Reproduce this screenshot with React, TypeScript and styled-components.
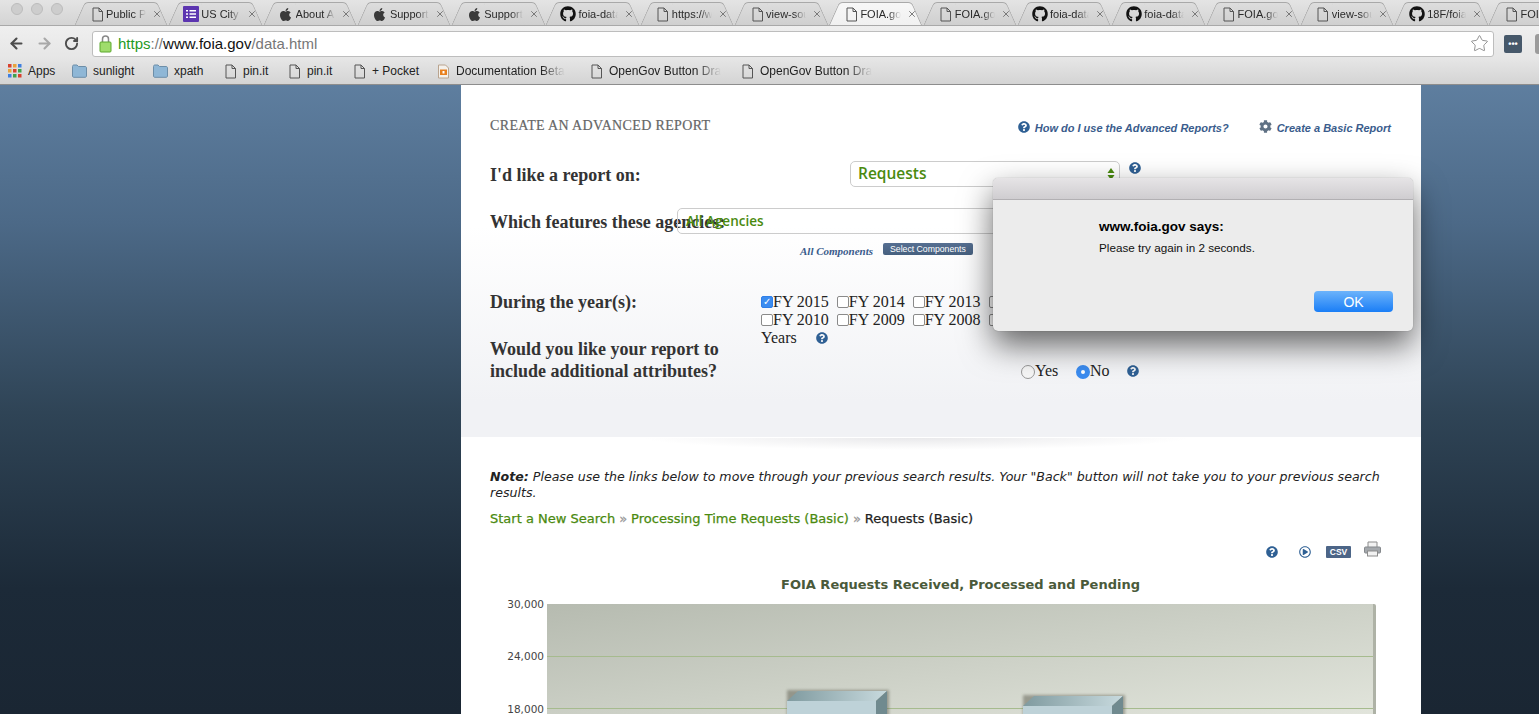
import styled, { createGlobalStyle } from "styled-components";
import { ArrowLeft, ArrowRight, RotateCw, Star, X } from "lucide-react";
import { FaApple, FaCog, FaGithub, FaQuestionCircle, FaRegPlayCircle } from "react-icons/fa";

const GlobalStyle = createGlobalStyle`
  html, body {
    margin: 0;
    height: 100%;
    overflow: hidden;
    background: #1a2734;
  }
`;

const Page = styled.div`
  position: relative;
  width: 1539px;
  height: 714px;
  overflow: hidden;
  display: flex;
  flex-direction: column;
  font-family: "Liberation Sans", Arial, sans-serif;
`;

const Chrome = styled.header`
  height: 85px;
  flex: none;
  box-sizing: border-box;
  border-bottom: 1px solid #8d8d8d;
  background: #dcdcdc;
  display: flex;
  flex-direction: column;
`;

const TabStrip = styled.div`
  height: 26px;
  flex: none;
  display: flex;
  overflow: hidden;
  padding-left: 11px;
  border-bottom: 1px solid #a9a9a9;
  box-sizing: border-box;
  background: linear-gradient(#e4e4e4, #d4d4d4);
`;

const Lights = styled.div`
  display: flex;
  gap: 8px;
  width: 63px;
  flex: none;
  padding-top: 3px;
`;

const Light = styled.span`
  width: 12px;
  height: 12px;
  border-radius: 50%;
  background: #cdcdcd;
  border: 1px solid #bcbcbc;
  box-sizing: border-box;
`;

const Tab = styled.div<{ $active?: boolean }>`
  position: relative;
  width: 94.3px;
  height: 24px;
  margin-top: 2px;
  flex: none;
  box-sizing: border-box;
  display: flex;
  align-items: center;
  padding: 0 6px 0 15px;
  font-size: 11px;
  color: #2a2a2a;
  z-index: ${(p) => (p.$active ? 1 : 0)};

  &::before,
  &::after {
    content: "";
    position: absolute;
    top: 0;
    bottom: ${(p) => (p.$active ? "-1px" : "0")};
    width: 55%;
    box-sizing: border-box;
    background: ${(p) => (p.$active ? "linear-gradient(#f7f7f7, #f0f0f0)" : "linear-gradient(#dddddd, #cfcfcf)")};
    border-top: 1px solid #a9a9a9;
    z-index: -1;
  }

  &::before {
    left: 0;
    border-left: 1px solid #a9a9a9;
    border-radius: 4px 0 0 0;
    transform: skewX(-24deg);
    transform-origin: bottom left;
  }

  &::after {
    right: 0;
    border-right: 1px solid #a9a9a9;
    border-radius: 0 4px 0 0;
    transform: skewX(24deg);
    transform-origin: bottom right;
  }
`;

const TabIcon = styled.span<{ $gap: number }>`
  width: 16px;
  flex: none;
  display: flex;
  justify-content: center;
  margin-right: ${(p) => p.$gap}px;
  color: #3a3a3a;
`;

const TabGithub = styled(FaGithub)`
  color: #111;
`;

const TabTitle = styled.span`
  flex: 1;
  min-width: 0;
  white-space: nowrap;
  overflow: hidden;
  -webkit-mask-image: linear-gradient(to right, #000 70%, transparent);
  mask-image: linear-gradient(to right, #000 70%, transparent);
`;

const TabClose = styled(X)`
  width: 10px;
  height: 10px;
  flex: none;
  margin-left: 6px;
  color: #666;
`;

const Toolbar = styled.div`
  height: 32px;
  flex: none;
  display: flex;
  align-items: center;
  padding: 3px 0 0 8px;
  box-sizing: border-box;
  background: linear-gradient(#efefef, #e6e6e6);
`;

const NavButton = styled.span<{ $muted?: boolean }>`
  width: 28px;
  flex: none;
  display: flex;
  justify-content: flex-start;
  color: ${(p) => (p.$muted ? "#a8a8a8" : "#4c4c4c")};
`;

const Omnibox = styled.div`
  width: 1402px;
  height: 26px;
  flex: none;
  box-sizing: border-box;
  display: flex;
  align-items: center;
  padding: 0 3px 0 6px;
  background: #fff;
  border: 1px solid #bdbdbd;
  border-radius: 3px;
  font-size: 15px;
  color: #777;
`;

const Url = styled.span`
  flex: 1;
  margin-left: 6px;
`;

const UrlScheme = styled.span`
  color: #1f9a1f;
`;

const UrlHost = styled.span`
  color: #111;
`;

const StarIcon = styled(Star)`
  color: #777;
  margin-right: 1px;
`;

const ExtensionIcon = styled.span`
  width: 18px;
  height: 18px;
  flex: none;
  margin-left: 10px;
  background: #46586a;
  color: #fff;
  border-radius: 2px;
  font-size: 9px;
  font-weight: 700;
  line-height: 18px;
  text-align: center;
`;

const SecondExtension = styled.span`
  width: 18px;
  height: 20px;
  flex: none;
  margin-left: 13px;
  background: #9b9b9b;
  border-radius: 3px;
`;

const Bookmarks = styled.nav`
  flex: 1;
  display: flex;
  align-items: center;
  padding-left: 8px;
  overflow: hidden;
  background: linear-gradient(#e6e6e6, #d4d4d4);
  font-size: 12px;
  color: #222;
`;

const Bookmark = styled.div<{ $width: number }>`
  width: ${(p) => p.$width}px;
  flex: none;
  display: flex;
  align-items: center;
  gap: 6px;
  white-space: nowrap;
`;

const BookmarkLabel = styled.span`
  overflow: hidden;
  max-width: 112px;
  -webkit-mask-image: linear-gradient(to right, #000 78%, transparent);
  mask-image: linear-gradient(to right, #000 78%, transparent);
`;

const Viewport = styled.main`
  flex: 1;
  min-height: 0;
  display: flex;
  padding-left: 461px;
  background: linear-gradient(#5e7e9f 0, #4c6987 22%, #2f4456 52%, #1c2a38 80%, #1a2633);
`;

const Sheet = styled.div`
  width: 960px;
  flex: none;
  background: #fff;
  display: flex;
  flex-direction: column;
`;

const FormPanel = styled.section`
  height: 352px;
  flex: none;
  box-sizing: border-box;
  padding: 32px 30px 0 29px;
  background: linear-gradient(#fff 0, #fff 40%, #f1f2f5 90%);
  color: #333;
`;

const PanelHeader = styled.div`
  display: flex;
  align-items: center;
  height: 17px;
`;

const PanelTitle = styled.h2`
  flex: 1;
  margin: 0;
  font-family: "Liberation Serif", serif;
  font-size: 14px;
  font-weight: 400;
  color: #666;
  letter-spacing: 0.35px;
  -webkit-text-stroke: 0.2px #666;
`;

const HelpLink = styled.a`
  display: flex;
  align-items: center;
  gap: 5px;
  margin-left: 30px;
  margin-top: 5px;
  font-size: 11px;
  font-weight: 700;
  font-style: italic;
  color: #3a5c8c;
`;

const HelpIcon = styled(FaQuestionCircle)`
  color: #2f6094;
  flex: none;
`;

const LinkHelpIcon = styled(HelpIcon)`
  margin-top: -3px;
`;

const GearIcon = styled(FaCog)`
  color: #5f7184;
  flex: none;
  margin-top: -3px;
`;

const FieldRow = styled.div<{ $height: number; $top?: number }>`
  display: flex;
  height: ${(p) => p.$height}px;
  margin-top: ${(p) => p.$top ?? 0}px;
`;

const FieldLabel = styled.label<{ $width: number; $offset?: number }>`
  width: ${(p) => p.$width}px;
  flex: none;
  margin-top: ${(p) => p.$offset ?? 0}px;
  font-family: "Liberation Serif", serif;
  font-size: 18px;
  font-weight: 700;
  line-height: 22px;
  color: #333;
  white-space: nowrap;
`;

const SelectBox = styled.div<{ $width: number; $large?: boolean }>`
  position: relative;
  width: ${(p) => p.$width}px;
  height: 26px;
  flex: none;
  box-sizing: border-box;
  padding-left: ${(p) => (p.$large ? 7 : 8)}px;
  border: 1px solid #ccc;
  border-radius: 5px;
  font-family: "Open Sans", "DejaVu Sans", sans-serif;
  font-size: ${(p) => (p.$large ? 15.5 : 13.5)}px;
  font-weight: 600;
  line-height: ${(p) => (p.$large ? 22 : 24)}px;
  color: #4a8a0f;
`;

const SelectArrows = styled.svg`
  position: absolute;
  right: 4px;
  top: 5px;
`;

const RowHelp = styled(HelpIcon)`
  margin-left: 9px;
  margin-top: 1px;
`;

const ComponentsRow = styled.div`
  display: flex;
  align-items: center;
  height: 13px;
  margin-top: 8px;
  padding-left: 310px;
`;

const ComponentsLabel = styled.em`
  width: 83px;
  flex: none;
  font-family: "Liberation Serif", serif;
  font-size: 11px;
  font-weight: 700;
  color: #3a5c8c;
  margin-top: 5px;
`;

const SmallButton = styled.span`
  height: 12px;
  box-sizing: border-box;
  padding: 0 7px;
  background: linear-gradient(#566f92, #46607f);
  color: #fff;
  font-size: 8.7px;
  line-height: 12px;
  border-radius: 2px;
`;

const YearGroup = styled.div`
  flex: none;
  font-family: "Liberation Serif", serif;
  font-size: 16px;
  line-height: 18px;
  color: #222;
`;

const YearLine = styled.div`
  white-space: nowrap;
`;

const YearOption = styled.span`
  margin-right: 4px;
`;

const Checkbox = styled.i<{ $checked?: boolean }>`
  display: inline-block;
  vertical-align: top;
  margin-top: 3px;
  width: 12px;
  height: 12px;
  box-sizing: border-box;
  border-radius: 2px;
  border: 1px solid ${(p) => (p.$checked ? "#2f7fe8" : "#8a8a8a")};
  background: ${(p) => (p.$checked ? "#3b8cf0" : "#fff")};
  color: #fff;
  font-style: normal;
  font-size: 10px;
  line-height: 10px;
  text-align: center;
`;

const YearHelp = styled(HelpIcon)`
  margin-left: 19px;
  position: relative;
  top: 1px;
`;

const AttributeOptions = styled.div`
  display: flex;
  align-items: center;
  height: 22px;
  margin-top: 22px;
  font-family: "Liberation Serif", serif;
  font-size: 16px;
  color: #222;
  margin-left: 301px;
`;

const Radio = styled.i<{ $checked?: boolean }>`
  width: 14px;
  height: 14px;
  flex: none;
  box-sizing: border-box;
  border-radius: 50%;
  margin-top: 2px;
  border: ${(p) => (p.$checked ? "5px solid #3b8cf0" : "1px solid #999")};
  background: ${(p) => (p.$checked ? "#fff" : "#f6f6f6")};
`;

const RadioText = styled.span<{ $width: number }>`
  width: ${(p) => p.$width}px;
  flex: none;
`;

const ResultPanel = styled.section`
  position: relative;
  flex: 1;
  min-height: 0;
  overflow: hidden;
  padding: 31px 30px 0 29px;
  border-top: 1px solid #fff;

  &::before {
    content: "";
    position: absolute;
    left: 180px;
    top: 0;
    width: 550px;
    height: 12px;
    background: radial-gradient(ellipse at top, #e9e9eb, transparent 70%);
  }
`;

const Note = styled.p`
  margin: 0;
  font-family: "DejaVu Sans", sans-serif;
  font-size: 12.6px;
  font-style: italic;
  line-height: 16px;
  color: #222;
`;

const NoteLead = styled.strong`
  font-weight: 700;
`;

const Crumbs = styled.div`
  margin-top: 9px;
  font-family: "DejaVu Sans", sans-serif;
  font-size: 13px;
  line-height: 18px;
  color: #222;
  -webkit-text-stroke: 0.25px;
`;

const CrumbLink = styled.a`
  color: #4a8a0f;
`;

const CrumbSep = styled.span`
  color: #999;
  margin: 0 4px;
`;

const ChartTools = styled.div`
  display: flex;
  align-items: center;
  justify-content: flex-end;
  height: 24px;
  margin-top: 12px;
  padding-right: 10px;
`;

const PlayIcon = styled(FaRegPlayCircle)`
  color: #2f6094;
  margin-left: 21px;
`;

const CsvBadge = styled.span`
  margin-left: 15px;
  width: 25px;
  height: 12px;
  background: #4c6587;
  color: #fff;
  border-radius: 1px;
  font-size: 8.5px;
  font-weight: 700;
  line-height: 12px;
  text-align: center;
`;

const PrintIcon = styled.svg`
  margin-left: 13px;
  margin-top: -6px;
`;

const ChartTitle = styled.h3`
  margin: 12px 0 0;
  padding-left: 40px;
  font-family: "DejaVu Sans", sans-serif;
  font-size: 13px;
  font-weight: 700;
  line-height: 18px;
  text-align: center;
  color: #4a5a3a;
`;

const Chart = styled.svg`
  display: block;
  margin: 5px 0 0 -29px;
  font-family: "DejaVu Sans", sans-serif;
`;

const Dialog = styled.div`
  position: absolute;
  left: 993px;
  top: 178px;
  width: 420px;
  height: 153px;
  display: flex;
  flex-direction: column;
  background: #ececec;
  border-radius: 5px;
  box-shadow: 0 0 1px rgba(0, 0, 0, 0.4), 0 14px 32px rgba(0, 0, 0, 0.6);
  overflow: hidden;
`;

const DialogBar = styled.div`
  height: 21px;
  flex: none;
  background: linear-gradient(#e6e4e6, #cfcdd0);
  border-bottom: 1px solid #b2b0b3;
`;

const DialogBody = styled.div`
  flex: 1;
  padding: 19px 20px 0 106px;
  display: flex;
  flex-direction: column;
`;

const DialogTitle = styled.div`
  font-size: 13.5px;
  font-weight: 700;
  line-height: 15px;
  color: #000;
`;

const DialogText = styled.div`
  margin-top: 7px;
  font-size: 11.7px;
  line-height: 14px;
  color: #111;
`;

const DialogButton = styled.button`
  align-self: flex-end;
  margin-top: 36px;
  width: 79px;
  height: 21px;
  padding: 0;
  border: none;
  border-radius: 4px;
  background: linear-gradient(#6cb3fb, #1a7ef6);
  color: #fff;
  font-family: inherit;
  font-size: 14px;
`;

const PageGlyph = () => (
  <svg width="13" height="15" viewBox="0 0 13 15" fill="none" stroke="#555" strokeWidth="1">
    <path d="M2 1h6l3.5 3.5V14H2z" />
    <path d="M8 1v3.5h3.5" />
  </svg>
);

const FormsGlyph = () => (
  <svg width="16" height="16" viewBox="0 0 16 16">
    <rect width="16" height="16" rx="1" fill="#5c35b0" />
    <path d="M3 4h2v1.5H3zM3 7.2h2v1.5H3zM3 10.4h2v1.5H3zM6.5 4H13v1.5H6.5zM6.5 7.2H13v1.5H6.5zM6.5 10.4H13v1.5H6.5z" fill="#fff" />
  </svg>
);

const FolderGlyph = () => (
  <svg width="15" height="14" viewBox="0 0 15 14">
    <path d="M.5 2.5C.5 1.6 1 1 2 1h3l1.5 1.5H13c1 0 1.5.6 1.5 1.5V12c0 .8-.6 1.3-1.5 1.3H2c-1 0-1.5-.5-1.5-1.3z" fill="#8fb7d6" stroke="#6d8ea8" />
  </svg>
);

const AppsGlyph = () => (
  <svg width="14" height="14" viewBox="0 0 14 14">
    {["#d8412f", "#e8a33d", "#3f7fe0", "#e8a33d", "#d8412f", "#3fa34d", "#3f7fe0", "#3fa34d", "#d8412f"].map((fill, i) => (
      <rect key={i} x={(i % 3) * 5} y={Math.floor(i / 3) * 5} width="3.5" height="3.5" fill={fill} />
    ))}
  </svg>
);

const DocGlyph = () => (
  <svg width="13" height="15" viewBox="0 0 13 15">
    <path d="M1.5 1h7l3 3v10h-10z" fill="#f4f1ec" stroke="#b9a48f" />
    <rect x="3" y="5.5" width="7" height="5.5" fill="#e8801e" />
    <rect x="5.5" y="7" width="2" height="2.5" fill="#fff" />
  </svg>
);

const LockGlyph = () => (
  <svg width="13" height="19" viewBox="0 0 13 19">
    <path d="M3.5 8V5a3 3 0 0 1 6 0v3" fill="none" stroke="#888" strokeWidth="1.5" />
    <rect x="1" y="8" width="11" height="10" rx="1" fill="#9fdc6c" stroke="#5da82e" />
  </svg>
);

const PrinterGlyph = () => (
  <PrintIcon width="17" height="16" viewBox="0 0 17 16">
    <path d="M4 6V1h9v5" fill="#f2f2f2" stroke="#8c8c8c" />
    <rect x="0.5" y="6" width="16" height="6" rx="1" fill="#a4a8ac" stroke="#85898d" />
    <rect x="3.5" y="10" width="10" height="5" fill="#f2f2f2" stroke="#8c8c8c" />
  </PrintIcon>
);

const tabs = [
  { icon: "page", title: "Public Projects" },
  { icon: "forms", title: "US City Open Data" },
  { icon: "apple", title: "About Apple Support" },
  { icon: "apple", title: "Support Communities" },
  { icon: "apple", title: "Support Communities" },
  { icon: "github", title: "foia-data/foia" },
  { icon: "page", title: "https://www.foia" },
  { icon: "page", title: "view-source:https" },
  { icon: "page", title: "FOIA.gov - Data", active: true },
  { icon: "page", title: "FOIA.gov - Data" },
  { icon: "github", title: "foia-data/foia" },
  { icon: "github", title: "foia-data/foia" },
  { icon: "page", title: "FOIA.gov - Data" },
  { icon: "page", title: "view-source:https" },
  { icon: "github", title: "18F/foia-hub" },
  { icon: "page", title: "FOIA.gov - Data" },
];

const tabIcon = (icon: string) => {
  if (icon === "forms") return <FormsGlyph />;
  if (icon === "apple") return <FaApple size={15} />;
  if (icon === "github") return <TabGithub size={16} />;
  return <PageGlyph />;
};

const years = [
  ["FY 2015", "FY 2014", "FY 2013", "FY 2012", "FY 2011"],
  ["FY 2010", "FY 2009", "FY 2008", "FY 2007", "All"],
];

const App = () => {
  return (
    <Page>
      <GlobalStyle />
      <Chrome>
        <TabStrip>
          <Lights>
            <Light />
            <Light />
            <Light />
          </Lights>
          {tabs.map((tab, i) => (
            <Tab key={i} $active={tab.active}>
              <TabIcon $gap={tab.icon === "page" ? 1 : 2}>{tabIcon(tab.icon)}</TabIcon>
              <TabTitle>{tab.title}</TabTitle>
              <TabClose strokeWidth={2} />
            </Tab>
          ))}
        </TabStrip>
        <Toolbar>
          <NavButton>
            <ArrowLeft size={17} strokeWidth={3} />
          </NavButton>
          <NavButton $muted>
            <ArrowRight size={17} strokeWidth={3} />
          </NavButton>
          <NavButton>
            <RotateCw size={15} strokeWidth={3} />
          </NavButton>
          <Omnibox>
            <LockGlyph />
            <Url>
              <UrlScheme>https</UrlScheme>://<UrlHost>www.foia.gov</UrlHost>/data.html
            </Url>
            <StarIcon size={19} strokeWidth={1} />
          </Omnibox>
          <ExtensionIcon>•••</ExtensionIcon>
          <SecondExtension />
        </Toolbar>
        <Bookmarks>
          <Bookmark $width={64}>
            <AppsGlyph />
            Apps
          </Bookmark>
          <Bookmark $width={81}>
            <FolderGlyph />
            sunlight
          </Bookmark>
          <Bookmark $width={71}>
            <FolderGlyph />
            xpath
          </Bookmark>
          <Bookmark $width={64}>
            <PageGlyph />
            pin.it
          </Bookmark>
          <Bookmark $width={65}>
            <PageGlyph />
            pin.it
          </Bookmark>
          <Bookmark $width={84}>
            <PageGlyph />
            + Pocket
          </Bookmark>
          <Bookmark $width={153}>
            <DocGlyph />
            <BookmarkLabel>Documentation Beta</BookmarkLabel>
          </Bookmark>
          <Bookmark $width={151}>
            <PageGlyph />
            <BookmarkLabel>OpenGov Button Drafts</BookmarkLabel>
          </Bookmark>
          <Bookmark $width={151}>
            <PageGlyph />
            <BookmarkLabel>OpenGov Button Drafts</BookmarkLabel>
          </Bookmark>
        </Bookmarks>
      </Chrome>

      <Viewport>
        <Sheet>
          <FormPanel>
            <PanelHeader>
              <PanelTitle>CREATE AN ADVANCED REPORT</PanelTitle>
              <HelpLink>
                <LinkHelpIcon size={12} />
                How do I use the Advanced Reports?
              </HelpLink>
              <HelpLink>
                <GearIcon size={13} />
                Create a Basic Report
              </HelpLink>
            </PanelHeader>
            <FieldRow $height={26} $top={27}>
              <FieldLabel $width={360} $offset={3}>
                I'd like a report on:
              </FieldLabel>
              <SelectBox $width={270} $large>
                Requests
                <SelectArrows width="8" height="14" viewBox="0 0 8 14">
                  <path d="M4 1l3.5 5H.5z" fill="#4a8a0f" />
                  <path d="M4 13l3.5-5H.5z" fill="#4a8a0f" />
                </SelectArrows>
              </SelectBox>
              <RowHelp size={12} />
            </FieldRow>
            <FieldRow $height={26} $top={21}>
              <FieldLabel $width={187} $offset={3}>
                Which features these agencies:
              </FieldLabel>
              <SelectBox $width={443}>All Agencies</SelectBox>
            </FieldRow>
            <ComponentsRow>
              <ComponentsLabel>All Components</ComponentsLabel>
              <SmallButton>Select Components</SmallButton>
            </ComponentsRow>
            <FieldRow $height={45} $top={38}>
              <FieldLabel $width={271} $offset={-2}>
                During the year(s):
              </FieldLabel>
              <YearGroup>
                {years.map((line) => (
                  <YearLine key={line[0]}>
                    {line.map((year) => (
                      <YearOption key={year}>
                        <Checkbox $checked={year === "FY 2015"}>{year === "FY 2015" ? "✓" : ""}</Checkbox>
                        {year}{" "}
                      </YearOption>
                    ))}
                  </YearLine>
                ))}
                <YearLine>
                  Years
                  <YearHelp size={12} />
                </YearLine>
              </YearGroup>
            </FieldRow>
            <FieldRow $height={44}>
              <FieldLabel $width={230}>
                Would you like your report to
                <br />
                include additional attributes?
              </FieldLabel>
              <AttributeOptions>
                <Radio />
                <RadioText $width={41}>Yes</RadioText>
                <Radio $checked />
                <RadioText $width={37}>No</RadioText>
                <HelpIcon size={12} />
              </AttributeOptions>
            </FieldRow>
          </FormPanel>

          <ResultPanel>
            <Note>
              <NoteLead>Note:</NoteLead> Please use the links below to move through your previous search results. Your
              "Back" button will not take you to your previous search results.
            </Note>
            <Crumbs>
              <CrumbLink>Start a New Search</CrumbLink>
              <CrumbSep>»</CrumbSep>
              <CrumbLink>Processing Time Requests (Basic)</CrumbLink>
              <CrumbSep>»</CrumbSep>
              Requests (Basic)
            </Crumbs>
            <ChartTools>
              <HelpIcon size={12} />
              <PlayIcon size={12} />
              <CsvBadge>CSV</CsvBadge>
              <PrinterGlyph />
            </ChartTools>
            <ChartTitle>FOIA Requests Received, Processed and Pending</ChartTitle>
            <Chart width="960" height="130" viewBox="0 0 960 130">
              <defs>
                <linearGradient id="plot" x1="0" y1="0" x2="1" y2="1">
                  <stop offset="0" stopColor="#b6bbb0" />
                  <stop offset="1" stopColor="#e4e7de" />
                </linearGradient>
                <linearGradient id="barTop" x1="0" y1="0" x2="1" y2="0">
                  <stop offset="0" stopColor="#7f9a9f" />
                  <stop offset="1" stopColor="#c8dade" />
                </linearGradient>
                <filter id="barShadow" x="-10%" y="-20%" width="120%" height="140%">
                  <feGaussianBlur stdDeviation="1.5" />
                </filter>
              </defs>
              <rect x="86" y="5" width="829" height="125" rx="2" fill="#aeb2a6" />
              <rect x="86" y="5" width="826" height="125" fill="url(#plot)" />
              <path d="M86 57.5h826M86 109.5h826" stroke="#a6bb8e" strokeWidth="1" />
              <g fontSize="10.5" fill="#444" textAnchor="end">
                <text x="83" y="9">30,000</text>
                <text x="83" y="61">24,000</text>
                <text x="83" y="114">18,000</text>
              </g>
              <rect x="326" y="91" width="102" height="39" fill="#5b5b50" opacity="0.5" filter="url(#barShadow)" />
              <path d="M326 102l11-10h89l-11 10z" fill="url(#barTop)" />
              <rect x="326" y="102" width="89" height="28" fill="#bed2d8" />
              <path d="M415 102l11-10v38h-11z" fill="#708a8f" />
              <rect x="562" y="96" width="102" height="34" fill="#5b5b50" opacity="0.5" filter="url(#barShadow)" />
              <path d="M562 107l11-10h89l-11 10z" fill="url(#barTop)" />
              <rect x="562" y="107" width="89" height="23" fill="#bed2d8" />
              <path d="M651 107l11-10v33h-11z" fill="#708a8f" />
            </Chart>
          </ResultPanel>
        </Sheet>
      </Viewport>

      <Dialog>
        <DialogBar />
        <DialogBody>
          <DialogTitle>www.foia.gov says:</DialogTitle>
          <DialogText>Please try again in 2 seconds.</DialogText>
          <DialogButton>OK</DialogButton>
        </DialogBody>
      </Dialog>
    </Page>
  );
};

export default App;
